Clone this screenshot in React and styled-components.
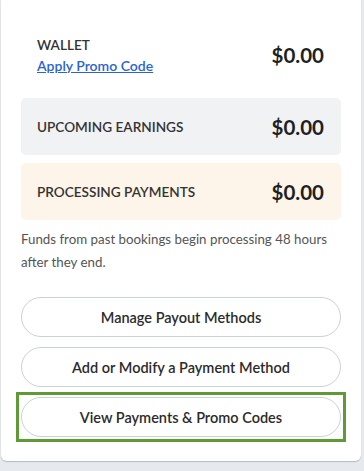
import styled, { createGlobalStyle } from "styled-components";

const GlobalStyle = createGlobalStyle`
  html, body {
    margin: 0;
    padding: 0;
    background: #e6e9ed;
  }
  body {
    font-family: "Lato", "Open Sans", sans-serif;
    -webkit-font-smoothing: antialiased;
  }
`;

const Page = styled.div`
  width: 364px;
  height: 471px;
  padding: 0 3px 0 1px;
  box-sizing: border-box;
  overflow: hidden;
`;

const Card = styled.section`
  background: #fff;
  border-radius: 0 0 6px 6px;
  box-shadow: 0 1px 1px rgba(120, 130, 145, 0.45);
  padding: 20px 20px 24px;
  display: flex;
  flex-direction: column;
`;

const Balances = styled.div`
  display: flex;
  flex-direction: column;
  gap: 8px;
`;

const Row = styled.div`
  display: flex;
  align-items: center;
  justify-content: space-between;
  height: ${(p) => (p.$tall ? "70px" : "57px")};
  padding: 0 16px;
  border-radius: 5px;
  background: ${(p) => p.$bg || "transparent"};
`;

const LabelGroup = styled.div`
  display: flex;
  flex-direction: column;
  gap: 4px;
`;

const Label = styled.span`
  font-size: 13.6px;
  font-weight: 600;
  color: #333;
`;

const PromoLink = styled.a`
  font-size: 14px;
  font-weight: 600;
  color: #2a63d6;
  text-decoration: underline;
  cursor: pointer;
`;

const Amount = styled.span`
  font-size: 20.5px;
  font-weight: 700;
  color: #1f1f1f;
  margin-right: 1px;
`;

const Note = styled.p`
  margin: 8px 0 0;
  font-size: 13.3px;
  line-height: 23px;
  color: #555;
`;

const Actions = styled.div`
  display: flex;
  flex-direction: column;
  gap: 10px;
  margin-top: 23px;
`;

const FocusRing = styled.div`
  display: flex;
  flex-direction: column;
  margin: -5px;
  padding: 2px;
  border: 3px solid #5f9a36;
`;

const PillButton = styled.button`
  height: 40px;
  border: 1px solid #cbd1da;
  border-radius: 20px;
  background: #fff;
  font-family: inherit;
  font-size: 14.5px;
  font-weight: 600;
  color: #2b2b2b;
  cursor: pointer;
  outline: none;
`;

export default function App() {
  return (
    <>
      <GlobalStyle />
      <Page>
        <Card>
          <Balances>
            <Row $tall>
              <LabelGroup>
                <Label>WALLET</Label>
                <PromoLink>Apply Promo Code</PromoLink>
              </LabelGroup>
              <Amount>$0.00</Amount>
            </Row>
            <Row $bg="#f1f2f4">
              <Label>UPCOMING EARNINGS</Label>
              <Amount>$0.00</Amount>
            </Row>
            <Row $bg="#fdf5e9">
              <Label>PROCESSING PAYMENTS</Label>
              <Amount>$0.00</Amount>
            </Row>
          </Balances>
          <Note>Funds from past bookings begin processing 48 hours after they end.</Note>
          <Actions>
            <PillButton>Manage Payout Methods</PillButton>
            <PillButton>Add or Modify a Payment Method</PillButton>
            <FocusRing>
              <PillButton>View Payments &amp; Promo Codes</PillButton>
            </FocusRing>
          </Actions>
        </Card>
      </Page>
    </>
  );
}
